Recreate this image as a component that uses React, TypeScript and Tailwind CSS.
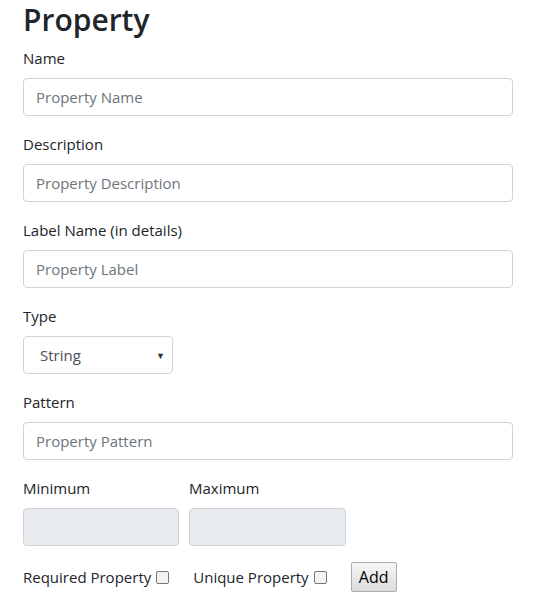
import React from "react";

const font = { fontFamily: '"Open Sans", "Noto Sans", Arial, sans-serif' };

function Field({ label, placeholder }: { label: string; placeholder: string }) {
  return (
    <div className="mb-4">
      <label className="block mb-2 text-[15px] leading-6 text-[#212529]">{label}</label>
      <input
        className="block w-[490px] h-[38px] px-3 border border-[#ced4da] rounded-[4px] bg-white text-[15px] text-[#495057] placeholder:text-[#6c757d] outline-none"
        placeholder={placeholder}
      />
    </div>
  );
}

export default function App() {
  return (
    <div className="pl-[23px] bg-white min-h-[604px] text-[#212529]" style={font}>
      <div className="pt-[2px] mb-[8px]">
        <h2 className="text-[30px] leading-[36px] font-semibold">Property</h2>
      </div>
      <Field label="Name" placeholder="Property Name" />
      <Field label="Description" placeholder="Property Description" />
      <Field label="Label Name (in details)" placeholder="Property Label" />
      <div className="mb-4">
        <label className="block mb-2 text-[15px] leading-6">Type</label>
        <div className="relative w-[150px] h-[38px] border border-[#ced4da] rounded-[4px] flex items-center pl-4 text-[15px] text-[#495057]">
          String
          <span className="absolute right-[7px] top-[12px] text-[9px] text-[#333]">▼</span>
        </div>
      </div>
      <Field label="Pattern" placeholder="Property Pattern" />
      <div className="flex gap-[10px] mb-4">
        <div>
          <label className="block mb-2 text-[15px] leading-6">Minimum</label>
          <div className="w-[156px] h-[38px] border border-[#ced4da] rounded-[4px] bg-[#e9ecef]" />
        </div>
        <div>
          <label className="block mb-2 text-[15px] leading-6">Maximum</label>
          <div className="w-[157px] h-[38px] border border-[#ced4da] rounded-[4px] bg-[#e9ecef]" />
        </div>
      </div>
      <div className="flex items-center text-[15px] leading-6">
        <span>Required Property</span>
        <span className="ml-[5px] w-[13px] h-[13px] border border-[#767676] rounded-[2px] bg-[#f3f3f3]" />
        <span className="ml-[24px]">Unique Property</span>
        <span className="ml-[5px] w-[13px] h-[13px] border border-[#767676] rounded-[2px] bg-[#f3f3f3]" />
        <button className="ml-[24px] w-[46px] h-[30px] border border-[#adadad] bg-gradient-to-b from-[#f6f6f6] to-[#dcdcdc] text-[16px] text-black rounded-[2px]">
          Add
        </button>
      </div>
    </div>
  );
}
